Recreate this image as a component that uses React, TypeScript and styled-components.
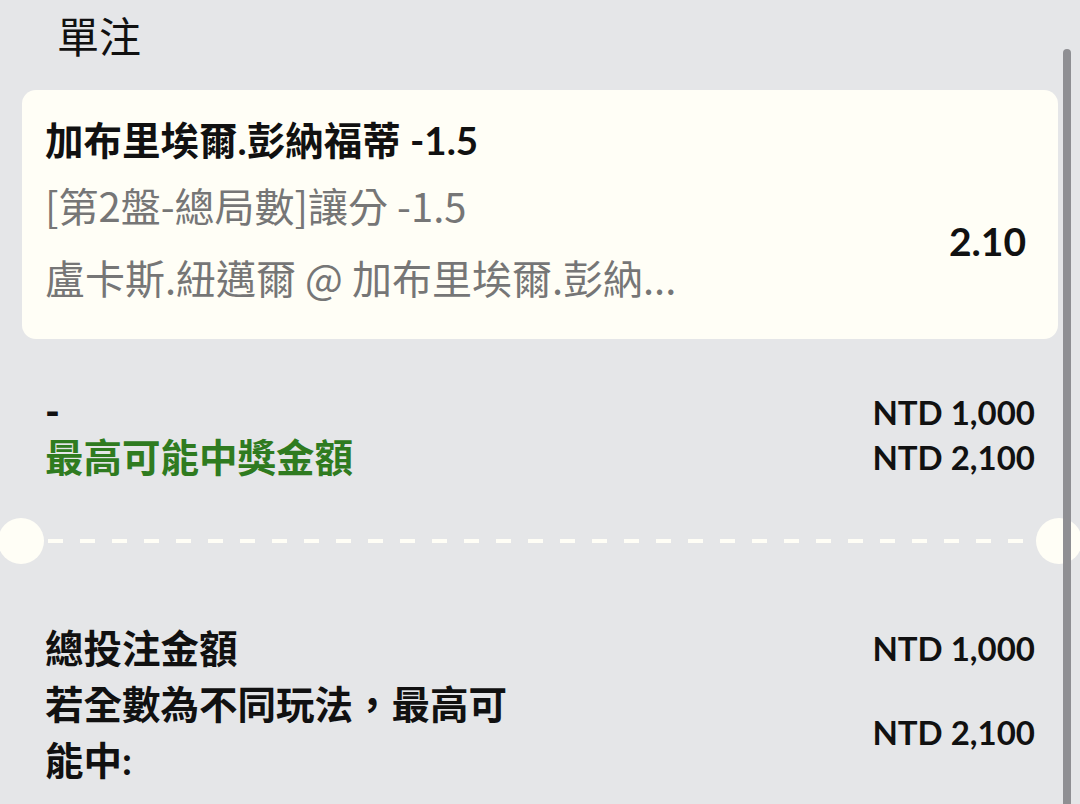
import styled, { createGlobalStyle } from 'styled-components';

const GlobalStyle = createGlobalStyle`
    html, body {
        margin: 0;
        padding: 0;
        background: #e5e6e8;
    }
    body {
        font-family: Lato, "Noto Sans CJK TC", sans-serif;
        color: #111;
    }
`

const Page = styled.div`
    position: relative;
    width: 1080px;
    height: 804px;
    overflow: hidden;
    background: #e5e6e8;
`

const PageTitle = styled.div`
    font-family: "Noto Sans CJK TC", sans-serif;
    font-size: 42px;
    line-height: 70px;
    padding-left: 57px;
    color: #111;
`

const Card = styled.div`
    margin: 20px 22px 0;
    background: #fffef6;
    border-radius: 14px;
    padding: 18px 32px 30px 23px;
`

const BetName = styled.div`
    font-size: 38.5px;
    font-weight: 700;
    line-height: 64px;
    color: #111;
`

const CardBody = styled.div`
    display: flex;
    align-items: center;
    justify-content: space-between;
`

const Details = styled.div`
    display: flex;
    flex-direction: column;
    min-width: 0;
`

const SubLine = styled.div<{ $gap?: number }>`
    font-family: "Noto Sans CJK TC", sans-serif;
    font-size: 40px;
    line-height: 64px;
    color: #767676;
    margin-top: ${p => p.$gap ?? 0}px;
    max-width: 680px;
    white-space: nowrap;
`

const Odds = styled.div`
    font-size: 39px;
    font-weight: 700;
    color: #111;
`

const SummaryRow = styled.div<{ $top?: number }>`
    display: flex;
    justify-content: space-between;
    align-items: center;
    padding: 0 45px;
    margin-top: ${p => p.$top ?? 0}px;
`

const LabelCol = styled.div`
    display: flex;
    flex-direction: column;
`

const Label = styled.div<{ $green?: boolean; $lh?: number }>`
    font-size: 38.5px;
    font-weight: 700;
    line-height: ${p => p.$lh ?? 48}px;
    color: ${p => (p.$green ? '#2f7b20' : '#111')};
`

const WrapLabel = styled(Label)`
    max-width: 480px;
`

const Dash = styled.div`
    font-size: 40px;
    font-weight: 900;
    line-height: 44px;
`

const ValueCol = styled.div`
    display: flex;
    flex-direction: column;
    align-items: flex-end;
`

const Amount = styled.div<{ $lh?: number }>`
    font-size: 33px;
    font-weight: 700;
    line-height: ${p => p.$lh ?? 45}px;
    color: #111;
`

const Divider = styled.div`
    display: flex;
    align-items: center;
    margin-top: 37px;
`

const Notch = styled.div`
    flex-shrink: 0;
    width: 46px;
    height: 46px;
    border-radius: 50%;
    background: #fffef6;
    margin: 0 -2px;
`

const DashLine = styled.div`
    flex: 1;
    height: 4px;
    margin: 0 6px;
    background: repeating-linear-gradient(
        to right,
        #fffef6 0,
        #fffef6 15px,
        transparent 15px,
        transparent 32px
    );
`

const ScrollThumb = styled.div`
    position: absolute;
    top: 49px;
    right: 9px;
    width: 8px;
    height: 800px;
    border-radius: 4px;
    background: #8f8f93;
`

const matchLabel = '盧卡斯.紐邁爾 @ 加布里埃爾.彭納...'

export default function App() {
    return (
        <Page>
            <GlobalStyle />
            <PageTitle>單注</PageTitle>
            <Card>
                <BetName>加布里埃爾.彭納福蒂 -1.5</BetName>
                <CardBody>
                    <Details>
                        <SubLine $gap={1}>[第2盤-總局數]讓分 -1.5</SubLine>
                        <SubLine $gap={8}>{matchLabel}</SubLine>
                    </Details>
                    <Odds>2.10</Odds>
                </CardBody>
            </Card>

            <SummaryRow $top={50}>
                <LabelCol>
                    <Dash>-</Dash>
                    <Label $green>最高可能中獎金額</Label>
                </LabelCol>
                <ValueCol>
                    <Amount>NTD 1,000</Amount>
                    <Amount>NTD 2,100</Amount>
                </ValueCol>
            </SummaryRow>

            <Divider>
                <Notch />
                <DashLine />
                <Notch />
            </Divider>

            <SummaryRow $top={56}>
                <Label $lh={56}>總投注金額</Label>
                <Amount $lh={56}>NTD 1,000</Amount>
            </SummaryRow>
            <SummaryRow>
                <WrapLabel $lh={56}>若全數為不同玩法，最高可能中:</WrapLabel>
                <Amount>NTD 2,100</Amount>
            </SummaryRow>

            <ScrollThumb />
        </Page>
    )
}
